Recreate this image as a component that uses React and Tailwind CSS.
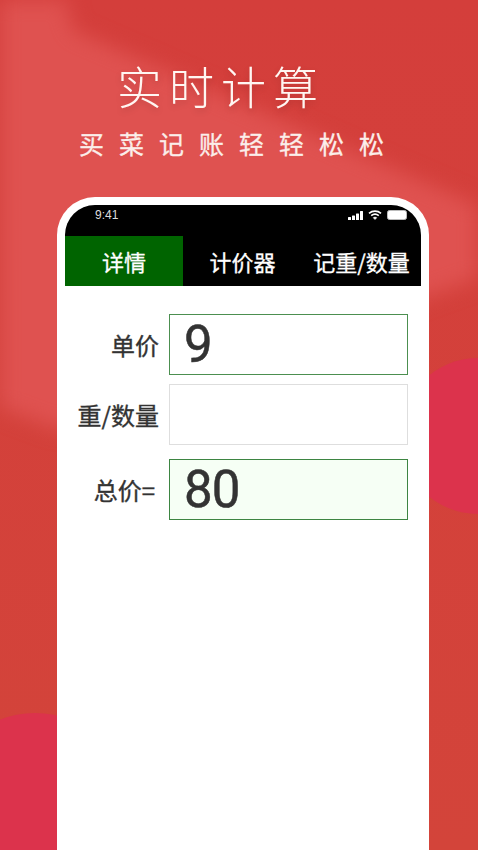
const cjk = { fontFamily: '"Noto Sans CJK SC", "Noto Sans", sans-serif' }

function StatusIcons() {
  return (
    <div className="flex items-center gap-[4px]">
      <svg width="16" height="9" viewBox="0 0 16 9" fill="#fff">
        <rect x="0" y="6" width="3" height="3" rx="0.5" />
        <rect x="4" y="4.5" width="3" height="4.5" rx="0.5" />
        <rect x="8" y="2.5" width="3" height="6.5" rx="0.5" />
        <rect x="12" y="0" width="3" height="9" rx="0.5" />
      </svg>
      <svg width="14" height="10" viewBox="0 0 14 10" fill="none" stroke="#fff" strokeWidth="1.7">
        <path d="M1 3.4C4.4 0.4 9.6 0.4 13 3.4" />
        <path d="M3.2 5.6C5.4 3.8 8.6 3.8 10.8 5.6" />
        <path d="M7 9.6L5.2 7.7C6.2 6.9 7.8 6.9 8.8 7.7Z" fill="#fff" strokeWidth="0.5" />
      </svg>
      <div className="ml-[1px] w-[20px] h-[10px] rounded-[2.5px] bg-white border border-[#bbb]" />
    </div>
  )
}

function Field({ label, value, labelClass, boxClass }) {
  return (
    <div className="flex items-center">
      <div className={`w-[94px] text-right text-[24px] leading-none [-webkit-text-stroke:0.35px_#333] text-[#333] whitespace-nowrap ${labelClass}`}>
        {label}
      </div>
      <div className={`ml-[10px] w-[239px] flex items-center pl-[14px] text-[51px] leading-none tracking-[-1px] [-webkit-text-stroke:0.5px_#333] text-[#333] border ${boxClass}`}
        style={{ fontFamily: 'Roboto, sans-serif' }}>
        {value}
      </div>
    </div>
  )
}

export default function App() {
  return (
    <div className="relative w-[478px] h-[850px] overflow-hidden bg-gradient-to-b from-[#d43e3b] to-[#d3443a]" style={cjk}>
      {/* background light streak and circles */}
      <div className="absolute inset-0 blur-[10px]">
        <div className="w-full h-full bg-[#df5250] [clip-path:polygon(-20px_-20px,64px_-20px,72px_30px,500px_215px,500px_270px,60px_430px,-20px_400px)]" />
      </div>
      <div className="absolute -left-[60px] top-[713px] w-[190px] h-[240px] rounded-full bg-[#dc334c]" />
      <div className="absolute left-[400px] top-[358px] w-[160px] h-[156px] rounded-full bg-[#dc334c]" />

      <div className="relative flex flex-col">
        <h1 className="mt-[57px] ml-[117px] text-[45px] leading-[58px] font-light tracking-[7px] text-[#fff6f2] whitespace-nowrap drop-shadow-md">
          实时计算
        </h1>
        <p className="mt-[10px] ml-[79px] text-[25px] leading-[36px] tracking-[15px] [-webkit-text-stroke:0.3px_#fbeeea] text-[#fbeeea] whitespace-nowrap">
          买菜记账轻轻松松
        </p>

        {/* phone */}
        <div className="mt-[36px] ml-[57px] w-[372px] h-[700px] border-x-[8px] border-t-[8px] border-white rounded-t-[38px] bg-white overflow-hidden">
          <div className="bg-black">
            <div className="h-[31px] flex items-center justify-between pl-[30px] pr-[14px] pb-[14px] pt-[3px]">
              <span className="text-[12px] text-[#ddd]" style={{ fontFamily: '"Liberation Sans", sans-serif' }}>9:41</span>
              <StatusIcons />
            </div>
            <div className="grid grid-cols-[118px_1fr_1fr] h-[50px] text-[22px] [-webkit-text-stroke:0.3px_#fff] text-white whitespace-nowrap">
              <div className="flex items-center justify-center bg-[#006400]">详情</div>
              <div className="flex items-center justify-center">计价器</div>
              <div className="flex items-center justify-center">记重/数量</div>
            </div>
          </div>

          <div className="pt-[28px] flex flex-col">
            <Field label="单价" value="9" boxClass="h-[61px] border-[#4c8f50] bg-white" />
            <div className="mt-[9px]">
              <Field label="重/数量" boxClass="h-[61px] border-[#dedede] bg-white" />
            </div>
            <div className="mt-[14px]">
              <Field label="总价=" value="80" labelClass="pr-[4px]" boxClass="h-[61px] border-[#3d8542] bg-[#f6fff5]" />
            </div>
          </div>
        </div>
      </div>
    </div>
  )
}
